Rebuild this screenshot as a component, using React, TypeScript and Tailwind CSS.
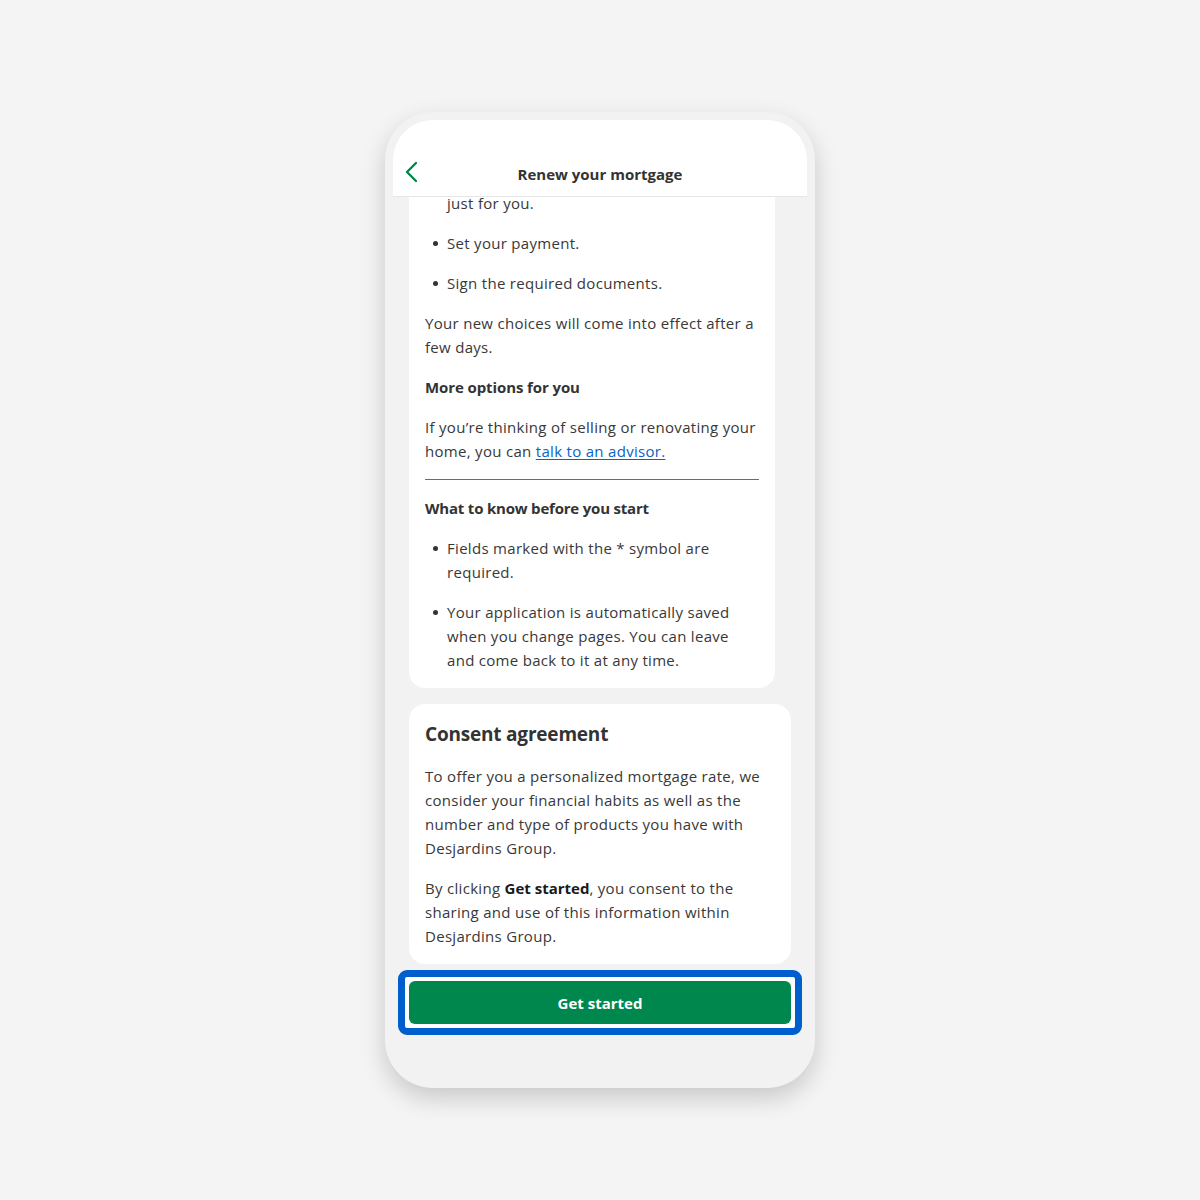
import * as React from 'react';

const Bullet: React.FC<{ children: React.ReactNode; className?: string }> = ({ children, className = '' }) => (
  <li className={`flex ${className}`}>
    <span className="mt-[10px] ml-[8px] mr-[9px] h-[5px] w-[5px] shrink-0 rounded-full bg-[#333333]" />
    <span className="pr-[6px]">{children}</span>
  </li>
);

export default function App() {
  return (
    <div
      className="flex min-h-[1200px] w-full items-start justify-center bg-[#f4f4f4] pt-[112px] text-[15px] leading-6 tracking-[0.3px] text-[#383838]"
      style={{ fontFamily: '"Open Sans", Lato, sans-serif' }}
    >
      <div className="w-[430px] rounded-[48px] bg-[#f2f2f3] p-2 shadow-[0_10px_24px_rgba(0,0,0,0.18)]">
        <div className="flex h-[960px] flex-col overflow-hidden rounded-t-[40px]">
          {/* Header */}
          <div className="flex h-[77px] shrink-0 items-end border-b border-[#e6e6e6] bg-white pb-[10px]">
            <div className="relative flex w-full items-center justify-center">
              <svg
                className="absolute left-[11px] top-[-1px]"
                width="14"
                height="22"
                viewBox="0 0 14 22"
                fill="none"
              >
                <path d="M12 2 L3 11 L12 20" stroke="#00874e" strokeWidth="2.4" strokeLinecap="round" strokeLinejoin="round" />
              </svg>
              <h1 className="text-[15px] font-bold tracking-normal text-[#333333]">Renew your mortgage</h1>
            </div>
          </div>

          {/* Content */}
          <div className="flex flex-1 flex-col overflow-hidden px-4">
            <div className="w-[366px] rounded-b-2xl bg-white px-4 pb-4">
              <div className="-mt-[6px] flex flex-col gap-4">
                <p className="pl-[22px]">just for you.</p>
                <ul className="flex flex-col gap-4">
                  <Bullet>Set your payment.</Bullet>
                  <Bullet>Sign the required documents.</Bullet>
                </ul>
                <p>Your new choices will come into effect after a few days.</p>
                <h3 className="font-bold tracking-[-0.1px] text-[#333333]">More options for you</h3>
                <p>
                  If you&rsquo;re thinking of selling or renovating your home, you can{' '}
                  <a href="#" className="text-[#0b62c4] underline underline-offset-2">
                    talk to an advisor.
                  </a>
                </p>
                <hr className="border-t border-[#6b6b6b]" />
                <h3 className="font-bold tracking-[-0.2px] text-[#333333]">What to know before you start</h3>
                <ul className="flex flex-col gap-4">
                  <Bullet>Fields marked with the * symbol are required.</Bullet>
                  <Bullet>
                    Your application is automatically saved when you change pages. You can leave and come back to it
                    at any time.
                  </Bullet>
                </ul>
              </div>
            </div>

            <div className="mt-4 flex flex-col gap-4 rounded-2xl bg-white p-4">
              <h2 className="text-[19px] leading-7 font-bold tracking-[-0.2px] text-[#333333]">Consent agreement</h2>
              <p>
                To offer you a personalized mortgage rate, we consider your financial habits as well as the number
                and type of products you have with Desjardins Group.
              </p>
              <p>
                By clicking <strong className="font-bold tracking-normal text-[#1a1a1a]">Get started</strong>, you
                consent to the sharing and use of this information within Desjardins Group.
              </p>
            </div>

            <div className="-mx-[11px] mt-[6px] rounded-[9px] border-[7px] border-[#005fcc] bg-white p-[4px]">
              <button className="flex h-[43px] w-full items-center justify-center rounded-[6px] bg-[#00874e] text-[15px] font-bold tracking-normal text-white">
                Get started
              </button>
            </div>
          </div>
        </div>
      </div>
    </div>
  );
}
